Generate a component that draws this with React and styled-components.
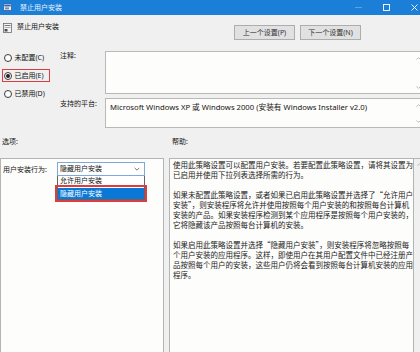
import React from "react";
import styled, { createGlobalStyle } from "styled-components";

const GlobalStyle = createGlobalStyle`
  html, body {
    margin: 0;
    padding: 0;
    background: #f0f0f0;
  }
`;

const Window = styled.div`
  width: 420px;
  height: 352px;
  overflow: hidden;
  background: #f0f0f0;
  color: #141414;
  font-family: "Noto Sans", "Noto Sans CJK SC", sans-serif;
  font-size: 7px;
  line-height: 10px;
  display: flex;
  flex-direction: column;
`;

const TitleBar = styled.div`
  height: 15px;
  flex: none;
  background: #1b7fd8;
  color: #eaf4ff;
  display: flex;
  align-items: center;
  padding-left: 3px;
`;

const TitleText = styled.span`
  margin-left: 8px;
`;

const Controls = styled.div`
  margin-left: auto;
  margin-right: -8px;
  display: flex;
`;

const ControlBtn = styled.span`
  width: 28px;
  height: 15px;
  display: flex;
  align-items: center;
  justify-content: center;
  opacity: ${(p) => (p.$dim ? 0.35 : 1)};
`;

const Header = styled.div`
  height: 36px;
  flex: none;
  display: flex;
  align-items: flex-start;
  padding-left: 3px;
`;

const HeaderIcon = styled.svg`
  margin-top: 8px;
`;

const HeaderTitle = styled.span`
  margin-left: 5px;
  margin-top: 7px;
`;

const NavButtons = styled.div`
  margin-left: auto;
  margin-right: 59px;
  margin-top: 10px;
  display: flex;
  gap: 5px;
`;

const NavButton = styled.div`
  width: 61px;
  height: 15px;
  box-sizing: border-box;
  background: #e1e1e1;
  border: 1px solid #adadad;
  display: flex;
  align-items: center;
  justify-content: center;
  color: #333;
`;

const Settings = styled.div`
  display: flex;
  flex: none;
`;

const RadioGroup = styled.div`
  width: 60px;
  flex: none;
  display: flex;
  flex-direction: column;
  gap: 5px;
`;

const RadioItem = styled.div`
  width: 48px;
  height: 13px;
  box-sizing: border-box;
  margin-left: 2px;
  border: 1.5px solid ${(p) => (p.$marked ? "#dc3d42" : "transparent")};
  display: flex;
  align-items: center;
  gap: 3px;
  padding-left: 0.5px;
`;

const RadioCircle = styled.span`
  width: 8px;
  height: 8px;
  box-sizing: border-box;
  border-radius: 50%;
  border: 1px solid #3a3a3a;
  background: #fff;
  display: flex;
  align-items: center;
  justify-content: center;
  &::after {
    content: "";
    width: 4px;
    height: 4px;
    border-radius: 50%;
    background: ${(p) => (p.$on ? "#222" : "transparent")};
  }
`;

const FieldGrid = styled.div`
  flex: 1;
  margin-right: -6px;
  display: grid;
  grid-template-columns: 45px 1fr;
  row-gap: 4px;
`;

const FieldLabel = styled.div`
  padding-top: ${(p) => p.$top}px;
`;

const FieldBox = styled.div`
  height: ${(p) => p.$h}px;
  box-sizing: border-box;
  background: #fdfdfb;
  border: 1px solid #b9b9b9;
  display: flex;
`;

const FieldText = styled.div`
  flex: 1;
  padding: 3px 0 0 4px;
  white-space: nowrap;
  font-size: 7.7px;
`;

const FieldScroll = styled.div`
  width: 14px;
  display: flex;
  flex-direction: column;
  justify-content: space-between;
  align-items: center;
  padding: 5px 0 4px;
`;

const SectionLabels = styled.div`
  height: 30px;
  flex: none;
  box-sizing: border-box;
  padding-top: 9px;
  display: flex;
`;

const SectionLabel = styled.span`
  width: ${(p) => p.$w}px;
  padding-left: 2px;
`;

const Panels = styled.div`
  flex: 1;
  display: flex;
  gap: 5px;
  margin-right: -4px;
`;

const OptionsBox = styled.div`
  width: 165px;
  box-sizing: border-box;
  background: #fdfdfb;
  border: 1px solid #b4b4b4;
  border-bottom: none;
  padding: 3px 0 0 2px;
`;

const OptionRow = styled.div`
  display: flex;
  align-items: center;
`;

const OptionLabel = styled.span`
  width: 54px;
  margin-top: 1px;
`;

const Dropdown = styled.div`
  position: relative;
  width: 88px;
  height: 14px;
  box-sizing: border-box;
  border: 1px solid #7fa8db;
  background: #fff;
  display: flex;
  align-items: center;
  padding-left: 2px;
`;

const DropdownArrow = styled.svg`
  margin-left: auto;
  margin-right: 4px;
`;

const DropdownList = styled.div`
  position: absolute;
  top: 13px;
  left: -1px;
  right: -1px;
  background: #fff;
  border: 1px solid #646464;
  border-top: none;
`;

const ListItem = styled.div`
  height: ${(p) => (p.$selected ? 11 : 12)}px;
  line-height: ${(p) => (p.$selected ? 11 : 10)}px;
  padding-left: 2px;
  background: ${(p) => (p.$selected ? "#0a78d6" : "transparent")};
  color: ${(p) => (p.$selected ? "#fff" : "#141414")};
  outline: ${(p) => (p.$selected ? "2px solid #dc3d42" : "none")};
  outline-offset: 1px;
`;

const HelpBox = styled.div`
  flex: 1;
  display: flex;
  background: #fdfdfb;
  border: 1px solid #b4b4b4;
  border-bottom: none;
  border-right: none;
`;

const HelpText = styled.div`
  flex: 1;
  padding: 1px 0 0 3px;
  font-family: "Noto Sans CJK SC", sans-serif;
  font-size: 7.5px;
  line-height: 10px;
  color: #1a1a1a;
`;

const HelpPara = styled.p`
  margin: 0 0 10px;
`;

const HelpLine = styled.span`
  display: block;
  white-space: nowrap;
`;

const ScrollTrack = styled.div`
  width: 10px;
  flex: none;
  background: #f0f0f0;
  border-left: 1px solid #b4b4b4;
  display: flex;
  justify-content: center;
  padding-top: 4px;
  align-items: flex-start;
`;

const Chevron = ({ up, color = "#a9a9a9" }) => (
  <svg width="5" height="3" viewBox="0 0 5 3">
    <path
      d={up ? "M0.5 2.6 L2.5 0.6 L4.5 2.6" : "M0.5 0.4 L2.5 2.4 L4.5 0.4"}
      fill="none"
      stroke={color}
      strokeWidth="0.8"
    />
  </svg>
);

const help = [
  [
    "使用此策略设置可以配置用户安装。若要配置此策略设置，请将其设置为",
    "已启用并使用下拉列表选择所需的行为。",
  ],
  [
    "如果未配置此策略设置，或者如果已启用此策略设置并选择了“允许用户",
    "安装”，则安装程序将允许并使用按照每个用户安装的和按照每台计算机",
    "安装的产品。如果安装程序检测到某个应用程序是按照每个用户安装的，",
    "它将隐藏该产品按照每台计算机的安装。",
  ],
  [
    "如果启用此策略设置并选择“隐藏用户安装”，则安装程序将忽略按照每",
    "个用户安装的应用程序。这样，即使用户在其用户配置文件中已经注册产",
    "品按照每个用户的安装，这些用户仍将会看到按照每台计算机安装的应用",
    "程序。",
  ],
];

const radios = [
  { label: "未配置(C)" },
  { label: "已启用(E)", on: true, marked: true },
  { label: "已禁用(D)" },
];

export default function App() {
  return (
    <Window>
      <GlobalStyle />
      <TitleBar>
        <svg width="9" height="9" viewBox="0 0 9 9">
          <rect x="0.5" y="1" width="8" height="6.5" fill="#dfe9f5" stroke="#3d5f8c" strokeWidth="0.8" />
          <rect x="1.3" y="2" width="6.4" height="1.4" fill="#2d63b8" />
          <rect x="2" y="4.4" width="4" height="2" fill="#7d8da3" />
        </svg>
        <TitleText>禁止用户安装</TitleText>
        <Controls>
          <ControlBtn $dim>
            <svg width="7" height="1" viewBox="0 0 7 1">
              <rect width="7" height="0.8" fill="#fff" />
            </svg>
          </ControlBtn>
          <ControlBtn>
            <svg width="7" height="7" viewBox="0 0 7 7">
              <rect x="0.5" y="0.5" width="6" height="6" fill="none" stroke="#fff" strokeWidth="0.9" />
            </svg>
          </ControlBtn>
          <ControlBtn>
            <svg width="7" height="7" viewBox="0 0 7 7">
              <path d="M0.5 0.5 L6.5 6.5 M6.5 0.5 L0.5 6.5" stroke="#fff" strokeWidth="0.9" />
            </svg>
          </ControlBtn>
        </Controls>
      </TitleBar>

      <Header>
        <HeaderIcon width="9" height="10" viewBox="0 0 9 10">
          <rect x="0.5" y="0.5" width="8" height="9" fill="#f4f4f4" stroke="#6b6b6b" strokeWidth="0.8" />
          <rect x="1.5" y="2" width="6" height="1" fill="#6b7d92" />
          <rect x="1.5" y="4" width="6" height="0.8" fill="#9a9a9a" />
          <rect x="1.5" y="6" width="3" height="2.5" fill="#4c4c4c" />
        </HeaderIcon>
        <HeaderTitle>禁止用户安装</HeaderTitle>
        <NavButtons>
          <NavButton>上一个设置(P)</NavButton>
          <NavButton>下一个设置(N)</NavButton>
        </NavButtons>
      </Header>

      <Settings>
        <RadioGroup>
          {radios.map((r) => (
            <RadioItem key={r.label} $marked={r.marked}>
              <RadioCircle $on={r.on} />
              <span>{r.label}</span>
            </RadioItem>
          ))}
        </RadioGroup>
        <FieldGrid>
          <FieldLabel $top={0}>注释:</FieldLabel>
          <FieldBox $h={43}>
            <FieldText />
            <FieldScroll>
              <Chevron up />
              <Chevron />
            </FieldScroll>
          </FieldBox>
          <FieldLabel $top={1}>支持的平台:</FieldLabel>
          <FieldBox $h={30}>
            <FieldText>
              Microsoft Windows XP 或 Windows 2000 (安装有 Windows Installer v2.0)
            </FieldText>
            <FieldScroll>
              <Chevron up />
              <Chevron />
            </FieldScroll>
          </FieldBox>
        </FieldGrid>
      </Settings>

      <SectionLabels>
        <SectionLabel $w={168}>选项:</SectionLabel>
        <SectionLabel>帮助:</SectionLabel>
      </SectionLabels>

      <Panels>
        <OptionsBox>
          <OptionRow>
            <OptionLabel>用户安装行为:</OptionLabel>
            <Dropdown>
              <span>隐藏用户安装</span>
              <DropdownArrow width="6" height="4" viewBox="0 0 6 4">
                <path d="M0.6 0.8 L3 3.2 L5.4 0.8" fill="none" stroke="#555" strokeWidth="0.8" />
              </DropdownArrow>
              <DropdownList>
                <ListItem>允许用户安装</ListItem>
                <ListItem $selected>隐藏用户安装</ListItem>
              </DropdownList>
            </Dropdown>
          </OptionRow>
        </OptionsBox>
        <HelpBox>
          <HelpText>
            {help.map((para, i) => (
              <HelpPara key={i}>
                {para.map((line) => (
                  <HelpLine key={line}>{line}</HelpLine>
                ))}
              </HelpPara>
            ))}
          </HelpText>
          <ScrollTrack>
            <Chevron up />
          </ScrollTrack>
        </HelpBox>
      </Panels>
    </Window>
  );
}
